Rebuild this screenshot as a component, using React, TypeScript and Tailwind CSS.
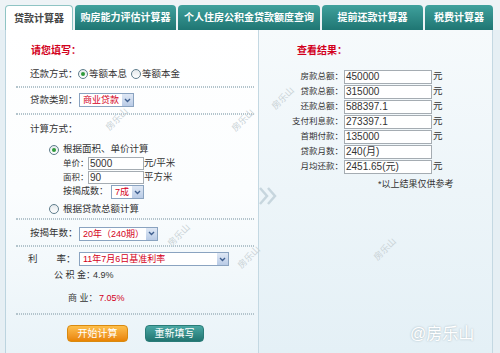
import React from 'react';

const tabs = [
  { label: '贷款计算器', w: 'w-[68px]', active: true },
  { label: '购房能力评估计算器', w: 'w-[101px]', active: false },
  { label: '个人住房公积金贷款额度查询', w: 'w-[142px]', active: false },
  { label: '提前还款计算器', w: 'w-[101px]', active: false },
  { label: '税费计算器', w: 'w-[68px]', active: false },
];

const results = [
  { label: '房款总额：', value: '450000', unit: true },
  { label: '贷款总额：', value: '315000', unit: true },
  { label: '还款总额：', value: '588397.1', unit: true },
  { label: '支付利息款：', value: '273397.1', unit: true },
  { label: '首期付款：', value: '135000', unit: true },
  { label: '贷款月数：', value: '240(月)', unit: false },
  { label: '月均还款：', value: '2451.65(元)', unit: true },
];

const marks = [
  'left-[104px] top-[113px]',
  'left-[230px] top-[114px]',
  'left-[166px] top-[229px]',
  'left-[236px] top-[251px]',
  'left-[270px] top-[92px]',
  'left-[372px] top-[243px]',
];

const Radio = ({ checked }: { checked?: boolean }) => (
  <span className="flex h-[10px] w-[10px] shrink-0 items-center justify-center rounded-full border border-[#5f7d8c] bg-gradient-to-b from-[#e4e9ec] to-white">
    {checked && <span className="h-[4px] w-[4px] rounded-full bg-[#2f9a3a]" />}
  </span>
);

const Select = ({ text, w }: { text: string; w: string }) => (
  <div className={`flex h-[14px] shrink-0 items-stretch border border-[#8aa3c0] bg-white ${w}`}>
    <span className="flex-1 overflow-hidden pl-[3px] text-[9px] leading-[12px] text-[#d4001a]">{text}</span>
    <span className="flex w-[11px] items-center justify-center bg-gradient-to-b from-[#dfe8f5] to-[#b9cbe6]">
      <svg width="7" height="5" viewBox="0 0 7 5">
        <path d="M1 1 L3.5 3.5 L6 1" fill="none" stroke="#3f5f8f" strokeWidth="1.4" />
      </svg>
    </span>
  </div>
);

const Sep = () => <div className="h-[2px] w-[238px] border-y border-dotted border-[#b3c4cc]" />;

export default function App() {
  return (
    <div className="relative h-[353px] w-[500px] overflow-hidden whitespace-nowrap bg-[#e6eff4] font-['Liberation_Sans','Noto_Sans_CJK_SC',sans-serif] text-[9.5px] text-[#333]">
      <div className="flex h-[30px] gap-[2px] bg-[#eef3f6] pl-[5px] pt-[5px]">
        {tabs.map((t) => (
          <div
            key={t.label}
            className={`flex h-[25px] items-center justify-center rounded-t-[4px] text-[10px] font-bold ${t.w} ${
              t.active
                ? 'border border-b-0 border-[#8fc4c4] bg-white text-[#444]'
                : 'bg-gradient-to-b from-[#3fa19d] to-[#1f7673] text-white'
            }`}
          >
            {t.label}
          </div>
        ))}
      </div>

      <div className="flex h-[323px] pl-[5px]">
        {/* left form */}
        <div className="flex w-[253px] flex-col border-l border-[#bcd4df] bg-gradient-to-b from-white via-[#fbfdfe] to-[#e9f3f8] pl-[10px]">
          <div className="mt-[14px] h-[14px] pl-[15px] text-[10px] font-bold leading-[14px] text-[#d2001c]">请您填写：</div>

          <div className="mt-[8px] flex h-[16px] items-center pl-[14px]">
            <span className="w-[48px] shrink-0">还款方式：</span>
            <Radio checked />
            <span className="ml-[1px] mr-[4px]">等额本息</span>
            <Radio />
            <span className="ml-[1px]">等额本金</span>
          </div>
          <div className="mt-[4px]"><Sep /></div>

          <div className="mt-[4px] flex h-[16px] items-center pl-[14px]">
            <span className="w-[49px] shrink-0">贷款类别：</span>
            <Select text="商业贷款" w="w-[55px]" />
          </div>
          <div className="mt-[5px]"><Sep /></div>

          <div className="mt-[7px] flex h-[14px] items-center pl-[14px]">计算方式：</div>
          <div className="mt-[7px] flex h-[13px] items-center gap-[4px] pl-[33px]">
            <Radio checked />
            <span>根据面积、单价计算</span>
          </div>
          <div className="flex h-[14px] items-center pl-[47px]">
            <span className="w-[25px] shrink-0 text-[8.5px]">单价：</span>
            <span className="h-[13px] w-[56px] shrink-0 border border-[#a5acb2] bg-white pl-[1px] text-[10px] leading-[11px]">5000</span>
            <span>元/平米</span>
          </div>
          <div className="flex h-[14px] items-center pl-[47px]">
            <span className="w-[25px] shrink-0 text-[8.5px]">面积：</span>
            <span className="h-[13px] w-[56px] shrink-0 border border-[#a5acb2] bg-white pl-[1px] text-[10px] leading-[11px]">90</span>
            <span>平方米</span>
          </div>
          <div className="mt-[1px] flex h-[14px] items-center pl-[47px]">
            <span className="w-[48px] shrink-0 text-[9px]">按揭成数：</span>
            <Select text="7成" w="w-[33px]" />
          </div>
          <div className="mt-[3px] flex h-[14px] items-center gap-[4px] pl-[33px]">
            <Radio />
            <span>根据贷款总额计算</span>
          </div>
          <div className="mt-[2px]"><Sep /></div>

          <div className="mt-[6px] flex h-[15px] items-center pl-[14px]">
            <span className="w-[49px] shrink-0">按揭年数：</span>
            <Select text="20年（240期）" w="w-[79px]" />
          </div>
          <div className="mt-[4px]"><Sep /></div>

          <div className="mt-[5px] flex h-[14px] items-center pl-[12px]">
            <span className="w-[51px] shrink-0">利　　率：</span>
            <Select text="11年7月6日基准利率" w="w-[150px]" />
          </div>
          <div className="mt-[3px] flex h-[14px] items-center pl-[38px]">
            <span className="w-[39px] shrink-0 text-[9px]">公 积 金：</span>
            <span className="text-[9px]">4.9%</span>
          </div>
          <div className="mt-[9px] flex h-[14px] items-center pl-[52px]">
            <span className="w-[31px] shrink-0 text-[9px]">商 业：</span>
            <span className="text-[9px] text-[#d4001a]">7.05%</span>
          </div>
          <div className="mt-[7px]"><Sep /></div>

          <div className="mt-[10px] flex h-[17px] gap-[17px] pl-[51px]">
            <div className="flex w-[61px] items-center justify-center rounded-[4px] border border-[#d98a10] bg-gradient-to-b from-[#fdbf4a] to-[#e98400] text-[10px] text-white">开始计算</div>
            <div className="flex w-[59px] items-center justify-center rounded-[4px] border border-[#2a7c78] bg-gradient-to-b from-[#4aa8a4] to-[#217571] text-[10px] text-white">重新填写</div>
          </div>
        </div>

        {/* right results */}
        <div className="relative flex w-[235px] flex-col border-x border-[#c4d8e2] bg-gradient-to-b from-[#f6fafc] to-[#e4f0f6]">
          <div className="mt-[14px] h-[14px] pl-[38px] text-[10px] font-bold leading-[14px] text-[#d2001c]">查看结果：</div>
          <div className="mt-[11px] flex flex-col">
            {results.map((r) => (
              <div key={r.label} className="flex h-[15px] items-center">
                <span className="w-[85px] shrink-0 pr-[1px] text-right text-[8.5px]">{r.label}</span>
                <span className="h-[14px] w-[88px] shrink-0 border border-[#a5acb2] bg-white pl-[1px] text-[10px] leading-[12px]">{r.value}</span>
                {r.unit && <span className="ml-[1px]">元</span>}
              </div>
            ))}
          </div>
          <div className="mt-[4px] pl-[119px] text-[9px] leading-[12px]">*以上结果仅供参考</div>
          <svg className="absolute left-[-2px] top-[156px]" width="22" height="20" viewBox="0 0 22 20">
            <path d="M3 2 L10 10 L3 18 M11 2 L18 10 L11 18" fill="none" stroke="#c7d6de" strokeWidth="2.5" />
          </svg>
        </div>
      </div>

      {marks.map((m) => (
        <span key={m} className={`absolute -rotate-45 text-[9px] text-[#c9d2d6] ${m}`}>房乐山</span>
      ))}
      <span className="absolute left-[410px] top-[322px] text-[16px] text-white [text-shadow:0_0_2px_#9fb0b8]">@房乐山</span>
    </div>
  );
}
